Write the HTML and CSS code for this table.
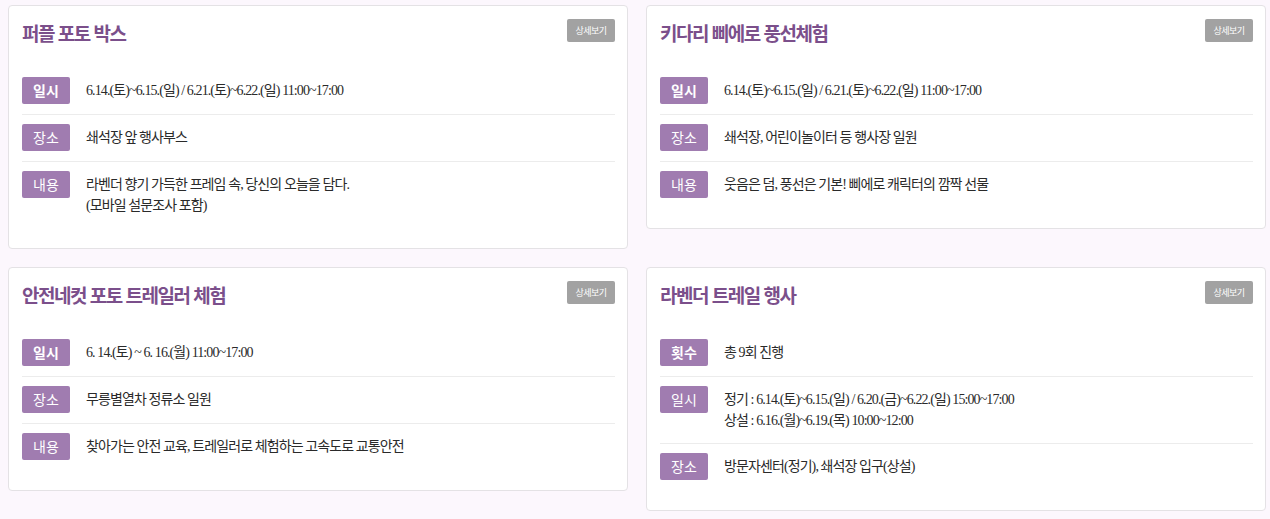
FILE: index.html
```html
<!DOCTYPE html>
<html lang="ko">
<head>
<meta charset="utf-8">
<link rel="stylesheet" href="styles.css">
</head>
<body>
<div class="grid">
  <div class="card">
    <div class="head"><h2 class="title">퍼플 포토 박스</h2><a class="more">상세보기</a></div>
    <div class="row"><span class="label strong">일시</span><div class="val">6.14.(토)~6.15.(일) / 6.21.(토)~6.22.(일) 11:00~17:00</div></div>
    <div class="row"><span class="label">장소</span><div class="val">쇄석장 앞 행사부스</div></div>
    <div class="row"><span class="label">내용</span><div class="val">라벤더 향기 가득한 프레임 속, 당신의 오늘을 담다.<br>(모바일 설문조사 포함)</div></div>
  </div>
  <div class="card">
    <div class="head"><h2 class="title">키다리 삐에로 풍선체험</h2><a class="more">상세보기</a></div>
    <div class="row"><span class="label strong">일시</span><div class="val">6.14.(토)~6.15.(일) / 6.21.(토)~6.22.(일) 11:00~17:00</div></div>
    <div class="row"><span class="label">장소</span><div class="val">쇄석장, 어린이놀이터 등 행사장 일원</div></div>
    <div class="row"><span class="label">내용</span><div class="val">웃음은 덤, 풍선은 기본! 삐에로 캐릭터의 깜짝 선물</div></div>
  </div>
  <div class="card">
    <div class="head"><h2 class="title">안전네컷 포토 트레일러 체험</h2><a class="more">상세보기</a></div>
    <div class="row"><span class="label strong">일시</span><div class="val">6. 14.(토) ~ 6. 16.(월) 11:00~17:00</div></div>
    <div class="row"><span class="label">장소</span><div class="val">무릉별열차 정류소 일원</div></div>
    <div class="row"><span class="label">내용</span><div class="val">찾아가는 안전 교육, 트레일러로 체험하는 고속도로 교통안전</div></div>
  </div>
  <div class="card">
    <div class="head"><h2 class="title">라벤더 트레일 행사</h2><a class="more">상세보기</a></div>
    <div class="row"><span class="label strong">횟수</span><div class="val">총 9회 진행</div></div>
    <div class="row"><span class="label">일시</span><div class="val">정기 : 6.14.(토)~6.15.(일) / 6.20.(금)~6.22.(일) 15:00~17:00<br>상설 : 6.16.(월)~6.19.(목) 10:00~12:00</div></div>
    <div class="row"><span class="label">장소</span><div class="val">방문자센터(정기), 쇄석장 입구(상설)</div></div>
  </div>
</div>
</body>
</html>
```

FILE: styles.css
```css
html, body {
  margin: 0;
  padding: 0;
  background: #fcf7fd;
}
body {
  font-family: "Noto Sans CJK KR", sans-serif;
}
.grid {
  display: grid;
  grid-template-columns: 620px 620px;
  column-gap: 18px;
  row-gap: 18px;
  align-items: start;
  padding: 5px 4px 0 8px;
}
.card {
  background: #fff;
  border: 1px solid #e4e2e5;
  border-radius: 4px;
  padding: 13px 12px 20px 13px;
}
.head {
  display: flex;
  justify-content: space-between;
  align-items: flex-start;
  height: 24px;
  margin-bottom: 25px;
}
.title {
  margin: 0;
  font-size: 19px;
  line-height: 27px;
  font-weight: 700;
  color: #7b4f8b;
  letter-spacing: -1.5px;
}
.more {
  display: block;
  width: 48px;
  height: 23px;
  line-height: 23px;
  text-align: center;
  background: #a2a2a2;
  color: #fff;
  font-size: 9px;
  border-radius: 2px;
  letter-spacing: -0.5px;
}
.row {
  display: flex;
  align-items: flex-start;
  padding: 9px 0 10px;
  border-bottom: 1px solid #ececec;
}
.row:last-child {
  border-bottom: none;
}
.label {
  flex: none;
  width: 48px;
  height: 27px;
  line-height: 27px;
  text-align: center;
  background: #a07cb0;
  color: #fff;
  font-size: 14px;
  border-radius: 2px;
  margin-right: 16px;
}
.label.strong {
  font-weight: 700;
}
.val {
  font-family: "Liberation Serif", "Noto Sans CJK KR", serif;
  font-size: 14px;
  line-height: 21px;
  padding: 3px 0 2px;
  color: #2a2a2a;
  letter-spacing: -0.9px;
}
```
